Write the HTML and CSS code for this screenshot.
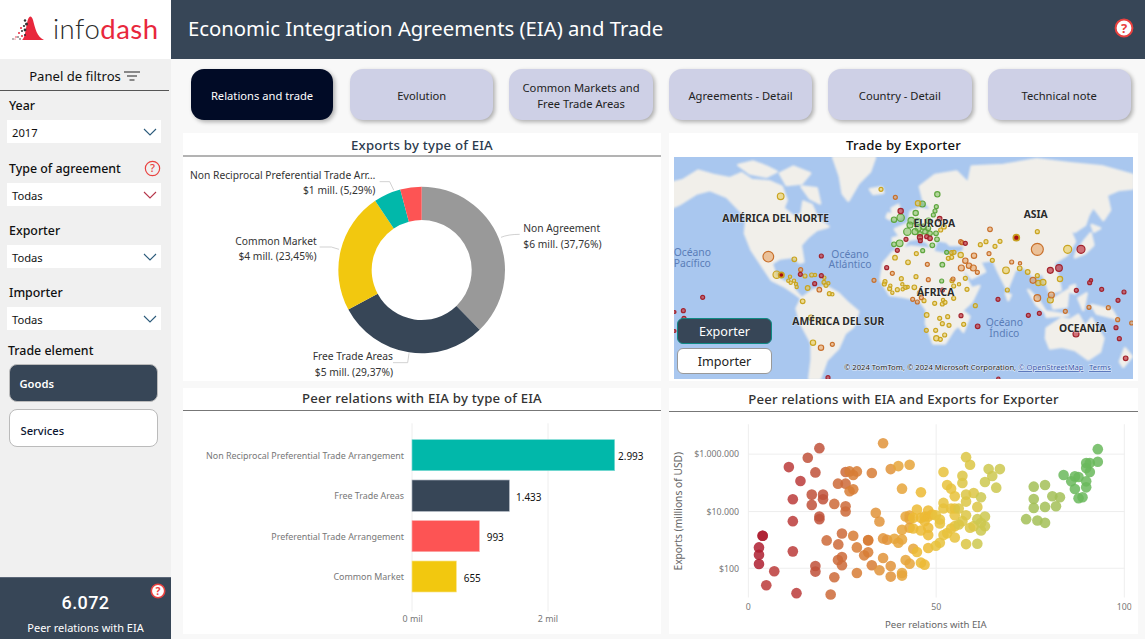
FILE: index.html
```html
<!DOCTYPE html>
<html lang="en">
<head>
<meta charset="utf-8">
<title>Economic Integration Agreements (EIA) and Trade</title>
<link rel="stylesheet" href="styles.css">
</head>
<body>
<div class="app">
  <div class="logo">
    <svg class="logo-mark" viewBox="0 0 33 24" aria-hidden="true">
      <path class="lm-red" d="M11 24C15 22 15 5 18 1.5C19.5 -.5 21 1 22 4C24 12 26 21 33 24Z"/>
      <g class="lm-dark"><circle cx="14" cy="4.5" r="1.2"/><circle cx="15.5" cy="8" r="1.5"/><circle cx="13" cy="10" r="1.1"/><circle cx="14" cy="14" r="1.4"/><circle cx="11" cy="15" r="1"/><circle cx="7" cy="21" r=".8"/><circle cx="2" cy="23" r=".7"/><circle cx="14" cy="19" r="1.1"/><circle cx="9" cy="23" r=".8"/></g>
      <g class="lm-red"><circle cx="10" cy="12" r="1"/><circle cx="8" cy="17" r="1"/><circle cx="11" cy="20" r="1"/><circle cx="5" cy="21" r=".8"/><circle cx="4" cy="23" r=".6"/></g>
    </svg>
    <span class="logo-text">info<em>dash</em></span>
  </div>
  <header class="topbar">
    <h1>Economic Integration Agreements (EIA) and Trade</h1>
    <svg class="help help-solid" viewBox="0 0 20 20" aria-hidden="true"><circle cx="10" cy="10" r="8.4"/><text x="10" y="14.6">?</text></svg>
  </header>

  <aside class="side">
    <div class="side-head">Panel de filtros
      <svg class="filter-ico" viewBox="0 0 16 11" aria-hidden="true"><path d="M0 1h16M3 5h10M5.5 9h5"/></svg>
    </div>
    <div class="filters">
      <div class="f-label">Year</div>
      <div class="dd"><span>2017</span><svg viewBox="0 0 14 8" aria-hidden="true"><path d="M1 1l6 6 6-6"/></svg></div>
      <div class="f-label f-row">Type of agreement
        <svg class="help help-line" viewBox="0 0 20 20" aria-hidden="true"><circle cx="10" cy="10" r="8.4"/><text x="10" y="14.6">?</text></svg>
      </div>
      <div class="dd dd-alert"><span>Todas</span><svg viewBox="0 0 14 8" aria-hidden="true"><path d="M1 1l6 6 6-6"/></svg></div>
      <div class="f-label">Exporter</div>
      <div class="dd"><span>Todas</span><svg viewBox="0 0 14 8" aria-hidden="true"><path d="M1 1l6 6 6-6"/></svg></div>
      <div class="f-label">Importer</div>
      <div class="dd"><span>Todas</span><svg viewBox="0 0 14 8" aria-hidden="true"><path d="M1 1l6 6 6-6"/></svg></div>
      <div class="f-label f-trade">Trade element</div>
      <div class="toggle toggle-on">Goods</div>
      <div class="toggle">Services</div>
    </div>
    <div class="kpi">
      <svg class="help help-solid kpi-help" viewBox="0 0 20 20" aria-hidden="true"><circle cx="10" cy="10" r="8.4"/><text x="10" y="14.6">?</text></svg>
      <div class="kpi-num">6.072</div>
      <div class="kpi-cap">Peer relations with EIA</div>
    </div>
  </aside>

  <main class="main">
    <nav class="tabs">
      <a class="tab tab-on">Relations and trade</a>
      <a class="tab">Evolution</a>
      <a class="tab">Common Markets and<br>Free Trade Areas</a>
      <a class="tab">Agreements - Detail</a>
      <a class="tab">Country - Detail</a>
      <a class="tab">Technical note</a>
    </nav>
    <div class="grid">
      <section class="panel">
        <h2 class="ptitle line-light">Exports by type of EIA</h2>
        <svg class="chart" viewBox="10 81 1434 672" role="img">
          <path class="d-gray" d="M726 170A250 250 0 0 1 899.9 599.6L830.3 527.8A150 150 0 0 0 726 270Z"/>
          <path class="d-navy" d="M899.9 599.6A250 250 0 0 1 506 538.6L594 491.2A150 150 0 0 0 830.3 527.8Z"/>
          <path class="d-yellow" d="M506 538.6A250 250 0 0 1 586.6 212.5L642.3 295.5A150 150 0 0 0 594 491.2Z"/>
          <path class="d-teal" d="M586.6 212.5A250 250 0 0 1 661.8 178.4L687.5 275A150 150 0 0 0 642.3 295.5Z"/>
          <path class="d-red" d="M661.8 178.4A250 250 0 0 1 726 170L726 270A150 150 0 0 0 687.5 275Z"/>
          <path class="leader" d="M964 322Q985 313 1020 313M420 351H455L478 358M600 155H630L642 180M640 698H684L688 670"/>
          <text class="lbl end" x="587" y="148">Non Reciprocal Preferential Trade Arr…</text>
          <text class="lbl end" x="587" y="191">$1 mill. (5,29%)</text>
          <text class="lbl end" x="411" y="346">Common Market</text>
          <text class="lbl end" x="411" y="390">$4 mill. (23,45%)</text>
          <text class="lbl" x="1031" y="307">Non Agreement</text>
          <text class="lbl" x="1031" y="353">$6 mill. (37,76%)</text>
          <text class="lbl end" x="640" y="691">Free Trade Areas</text>
          <text class="lbl end" x="640" y="737">$5 mill. (29,37%)</text>
        </svg>
      </section>

      <section class="panel">
        <h2 class="ptitle ptitle-map">Trade by Exporter</h2>
        <div class="map">
          <svg class="map-svg" viewBox="12 82 1377 664" role="img">
            <rect class="water" x="0" y="0" width="1425" height="765"/>
            <g class="land">
              <path d="M0 160L40 150L85 122L130 135L180 145L215 130L245 150L300 155L335 170L350 210L340 235L375 262L395 250L400 215L425 225L445 270L475 290L440 300L415 320L392 345L400 395L388 398L372 380L330 385L305 400L318 440L345 458L372 452L372 478L395 505L375 490L345 470L305 450L275 405L245 360L225 310L230 262L170 200L120 180L80 190L30 222L0 235Z"/>
              <path d="M205 105L250 95L290 110L320 125L290 140L240 130ZM330 130L370 110L420 130L395 160L350 165ZM395 170L420 205L450 220L440 175ZM490 82L615 82L600 125L565 160L535 212L518 190L510 140Z"/>
              <path d="M395 505L430 480L470 470L505 490L535 520L565 545L550 590L525 610L505 655L470 690L450 746L418 746L425 690L425 640L390 575L380 535Z"/>
              <path d="M640 400L670 365L720 350L770 355L800 368L855 378L885 440L905 475L928 468L905 515L878 540L875 575L850 600L825 640L790 640L768 580L770 540L748 510L700 500L660 495L632 450Z"/>
              <path d="M670 345L668 325L690 320L675 298L715 280L722 245L750 235L790 245L760 210L750 170L795 135L860 125L895 160L905 110L1000 105L1100 88L1200 100L1300 110L1389 135L1389 175L1345 180L1310 195L1320 240L1300 270L1270 230L1255 255L1245 285L1215 305L1200 300L1215 335L1190 375L1150 400L1165 440L1172 480L1140 490L1118 430L1090 440L1060 410L1035 420L1012 478L985 425L970 390L930 395L945 425L905 445L880 415L860 372L880 365L885 345L840 345L830 335L800 330L790 360L770 335L740 325L715 330L700 350L680 352Z"/>
              <path d="M665 235L685 225L695 260L672 272ZM655 250L665 255L660 268L650 262ZM600 178L635 172L640 188L610 192Z"/>
              <path d="M1245 330L1262 310L1270 345L1245 370L1215 382L1220 365ZM1265 285L1290 295L1272 305Z"/>
              <path d="M1130 595L1175 565L1200 570L1225 555L1245 590L1265 565L1300 625L1290 665L1255 688L1215 660L1175 650L1140 655L1128 625Z"/>
              <path d="M1075 480L1105 510L1130 550L1100 525ZM1125 545L1195 555L1130 560ZM1145 510L1195 480L1190 530L1150 535ZM1225 505L1250 490L1240 540ZM1265 525L1325 540L1340 565L1280 550ZM885 548L898 560L880 605L868 590ZM1365 655L1385 680L1360 710L1350 695ZM1200 470L1215 465L1215 490L1200 485ZM1008 490L1022 495L1015 510Z"/>
            </g>
            <g class="pts pg">
              <circle cx="802" cy="193" r="8"/><circle cx="757" cy="222" r="9"/><circle cx="737" cy="249" r="8"/><circle cx="692" cy="263" r="11"/><circle cx="672" cy="269" r="8"/><circle cx="724" cy="272" r="10"/><circle cx="742" cy="275" r="10"/><circle cx="775" cy="272" r="8"/><circle cx="799" cy="230" r="6"/><circle cx="795" cy="243" r="6"/><circle cx="790" cy="255" r="6"/><circle cx="720" cy="285" r="9"/><circle cx="745" cy="295" r="9"/><circle cx="760" cy="290" r="8"/><circle cx="775" cy="295" r="7"/><circle cx="712" cy="305" r="11"/><circle cx="780" cy="310" r="7"/><circle cx="798" cy="310" r="7"/><circle cx="801" cy="328" r="7"/><circle cx="672" cy="343" r="7"/><circle cx="689" cy="340" r="10"/><circle cx="787" cy="346" r="7"/><circle cx="758" cy="362" r="6"/><circle cx="817" cy="404" r="7"/><circle cx="830" cy="367" r="6"/><circle cx="815" cy="453" r="6"/><circle cx="735" cy="305" r="9"/><circle cx="765" cy="305" r="7"/><circle cx="750" cy="312" r="7"/>
            </g>
            <g class="pts py">
              <circle cx="633" cy="178" r="6"/><circle cx="332" cy="199" r="10"/><circle cx="744" cy="220" r="8"/><circle cx="822" cy="290" r="7"/><circle cx="812" cy="300" r="6"/><circle cx="373" cy="388" r="7"/><circle cx="320" cy="434" r="11"/><circle cx="675" cy="383" r="7"/><circle cx="714" cy="397" r="7"/><circle cx="739" cy="371" r="6"/><circle cx="845" cy="368" r="6"/><circle cx="852" cy="367" r="6"/><circle cx="835" cy="385" r="6"/><circle cx="845" cy="382" r="6"/><circle cx="872" cy="375" r="8"/><circle cx="967" cy="391" r="6"/><circle cx="1102" cy="305" r="6"/><circle cx="948" cy="335" r="6"/><circle cx="990" cy="334" r="6"/><circle cx="931" cy="344" r="6"/><circle cx="975" cy="349" r="6"/><circle cx="1008" cy="421" r="10"/><circle cx="1049" cy="415" r="7"/><circle cx="1073" cy="426" r="7"/><circle cx="1102" cy="437" r="6"/><circle cx="1105" cy="459" r="8"/><circle cx="1119" cy="457" r="9"/><circle cx="1170" cy="447" r="8"/><circle cx="1193" cy="358" r="12"/><circle cx="1012" cy="480" r="6"/><circle cx="1141" cy="510" r="9"/><circle cx="916" cy="527" r="6"/><circle cx="891" cy="478" r="6"/><circle cx="886" cy="445" r="6"/><circle cx="867" cy="463" r="5"/><circle cx="851" cy="468" r="6"/><circle cx="846" cy="452" r="6"/><circle cx="738" cy="440" r="6"/><circle cx="694" cy="446" r="6"/><circle cx="667" cy="488" r="5"/><circle cx="659" cy="476" r="6"/><circle cx="645" cy="455" r="6"/><circle cx="643" cy="462" r="6"/><circle cx="661" cy="467" r="5"/><circle cx="697" cy="463" r="5"/><circle cx="682" cy="479" r="6"/><circle cx="698" cy="478" r="5"/><circle cx="707" cy="472" r="6"/><circle cx="713" cy="471" r="5"/><circle cx="733" cy="472" r="7"/><circle cx="750" cy="490" r="8"/><circle cx="762" cy="512" r="6"/><circle cx="794" cy="520" r="6"/><circle cx="817" cy="522" r="6"/><circle cx="825" cy="517" r="6"/><circle cx="819" cy="510" r="5"/><circle cx="851" cy="505" r="6"/><circle cx="770" cy="555" r="7"/><circle cx="809" cy="565" r="6"/><circle cx="833" cy="560" r="6"/><circle cx="817" cy="581" r="6"/><circle cx="837" cy="586" r="6"/><circle cx="881" cy="583" r="6"/><circle cx="769" cy="601" r="6"/><circle cx="797" cy="601" r="6"/><circle cx="824" cy="615" r="6"/><circle cx="799" cy="625" r="8"/><circle cx="811" cy="628" r="6"/><circle cx="429" cy="638" r="8"/><circle cx="423" cy="563" r="8"/><circle cx="456" cy="575" r="7"/><circle cx="398" cy="514" r="7"/><circle cx="413" cy="474" r="7"/><circle cx="478" cy="491" r="6"/><circle cx="487" cy="493" r="5"/><circle cx="405" cy="438" r="6"/><circle cx="425" cy="435" r="6"/><circle cx="435" cy="435" r="5"/><circle cx="360" cy="440" r="5"/><circle cx="355" cy="452" r="5"/><circle cx="362" cy="458" r="5"/><circle cx="372" cy="452" r="5"/><circle cx="378" cy="462" r="5"/><circle cx="380" cy="471" r="5"/><circle cx="463" cy="443" r="5"/><circle cx="462" cy="457" r="6"/><circle cx="468" cy="466" r="6"/><circle cx="475" cy="460" r="5"/>
            </g>
            <g class="pts po">
              <circle cx="676" cy="202" r="6"/><circle cx="960" cy="298" r="7"/><circle cx="872" cy="335" r="6"/><circle cx="876" cy="338" r="6"/><circle cx="912" cy="377" r="8"/><circle cx="957" cy="371" r="6"/><circle cx="874" cy="414" r="9"/><circle cx="886" cy="392" r="8"/><circle cx="897" cy="407" r="8"/><circle cx="910" cy="414" r="9"/><circle cx="922" cy="427" r="6"/><circle cx="1025" cy="396" r="6"/><circle cx="1050" cy="400" r="5"/><circle cx="1102" cy="358" r="18"/><circle cx="1089" cy="451" r="9"/><circle cx="1102" cy="504" r="10"/><circle cx="1144" cy="495" r="9"/><circle cx="1257" cy="532" r="6"/><circle cx="1186" cy="544" r="6"/><circle cx="1315" cy="533" r="6"/><circle cx="1385" cy="579" r="6"/><circle cx="1343" cy="569" r="6"/><circle cx="612" cy="451" r="6"/><circle cx="667" cy="430" r="6"/><circle cx="775" cy="449" r="6"/><circle cx="849" cy="447" r="6"/><circle cx="728" cy="508" r="6"/><circle cx="742" cy="516" r="6"/><circle cx="754" cy="503" r="6"/><circle cx="772" cy="403" r="6"/><circle cx="453" cy="653" r="8"/><circle cx="487" cy="643" r="6"/><circle cx="392" cy="419" r="6"/><circle cx="448" cy="479" r="7"/><circle cx="295" cy="380" r="16"/>
            </g>
            <g class="pts pr">
              <circle cx="454" cy="378" r="6"/><circle cx="692" cy="243" r="8"/><circle cx="809" cy="266" r="7"/><circle cx="391" cy="433" r="6"/><circle cx="708" cy="328" r="6"/><circle cx="682" cy="361" r="6"/><circle cx="650" cy="413" r="6"/><circle cx="886" cy="340" r="6"/><circle cx="750" cy="322" r="8"/><circle cx="770" cy="320" r="6"/><circle cx="780" cy="325" r="7"/><circle cx="751" cy="332" r="6"/><circle cx="1233" cy="358" r="12"/><circle cx="1167" cy="414" r="10"/><circle cx="1141" cy="421" r="9"/><circle cx="1259" cy="458" r="6"/><circle cx="1263" cy="451" r="5"/><circle cx="1219" cy="481" r="6"/><circle cx="1295" cy="478" r="6"/><circle cx="1362" cy="486" r="6"/><circle cx="1344" cy="511" r="6"/><circle cx="984" cy="508" r="6"/><circle cx="1075" cy="556" r="6"/><circle cx="1108" cy="550" r="6"/><circle cx="923" cy="589" r="7"/><circle cx="1218" cy="612" r="9"/><circle cx="1338" cy="593" r="6"/><circle cx="1348" cy="626" r="6"/><circle cx="1367" cy="685" r="7"/><circle cx="873" cy="557" r="6"/><circle cx="817" cy="480" r="6"/><circle cx="98" cy="502" r="6"/><circle cx="40" cy="542" r="6"/><circle cx="42" cy="565" r="6"/><circle cx="14" cy="546" r="4"/><circle cx="14" cy="603" r="4"/><circle cx="434" cy="461" r="6"/><circle cx="454" cy="437" r="6"/><circle cx="474" cy="743" r="6"/><circle cx="985" cy="746" r="5"/>
            </g>
            <g class="pts pd"><circle cx="1039" cy="323" r="9"/><circle cx="334" cy="435" r="8"/></g>
            <g class="m-sea">
              <text x="67" y="378">Océano</text><text x="67" y="410">Pacífico</text>
              <text x="540" y="383">Océano</text><text x="540" y="414">Atlántico</text>
              <text x="1003" y="589">Océano</text><text x="1003" y="620">Índico</text>
            </g>
            <g class="m-cont">
              <text x="317" y="275">AMÉRICA DEL NORTE</text><text x="793" y="292">EUROPA</text><text x="1097" y="265">ASIA</text>
              <text x="797" y="497">ÁFRICA</text><text x="505" y="584">AMÉRICA DEL SUR</text><text x="1238" y="606">OCEANÍA</text>
            </g>
            <text class="m-attr" x="522" y="720">© 2024 TomTom, © 2024 Microsoft Corporation, <tspan class="m-link">© OpenStreetMap</tspan> <tspan class="m-link" dx="10">Terms</tspan></text>
          </svg>
          <div class="map-btns">
            <div class="mbtn mbtn-on">Exporter</div>
            <div class="mbtn">Importer</div>
          </div>
        </div>
      </section>

      <section class="panel">
        <h2 class="ptitle ptitle-short">Peer relations with EIA by type of EIA</h2>
        <svg class="chart" viewBox="10 78 1434 669" role="img">
          <path class="gridl" d="M697 115V680M1105 115V680"/>
          <rect class="b-teal" x="697" y="164" width="608" height="93"/>
          <rect class="b-navy" x="697" y="285" width="292" height="94"/>
          <rect class="b-red" x="697" y="407" width="202" height="93"/>
          <rect class="b-yellow" x="697" y="528" width="133" height="93"/>
          <text class="axl end" x="673" y="222">Non Reciprocal Preferential Trade Arrangement</text>
          <text class="axl end" x="673" y="342">Free Trade Areas</text>
          <text class="axl end" x="673" y="465">Preferential Trade Arrangement</text>
          <text class="axl end" x="673" y="585">Common Market</text>
          <text class="val" x="1315" y="224">2.993</text>
          <text class="val" x="1009" y="347">1.433</text>
          <text class="val" x="921" y="467">993</text>
          <text class="val" x="852" y="591">655</text>
          <text class="axl mid" x="699" y="711">0 mil</text>
          <text class="axl mid" x="1105" y="711">2 mil</text>
        </svg>
      </section>

      <section class="panel">
        <h2 class="ptitle">Peer relations with EIA and Exports for Exporter</h2>
        <svg class="chart" viewBox="0 81 1407 669" role="img">
          <clipPath id="plot-clip"><rect x="0" y="81" width="1391" height="669"/></clipPath>
          <path class="gridl" d="M236 118V640M802 118V640M1369 118V640M236 208H1369M236 381H1369M236 552H1369"/>
          <text class="axv end" x="208" y="218">$1.000.000</text>
          <text class="axv end" x="208" y="391">$10.000</text>
          <text class="axv end" x="208" y="563">$100</text>
          <text class="axv mid" x="236" y="678">0</text>
          <text class="axv mid" x="802" y="678">50</text>
          <text class="axv mid" x="1369" y="678" clip-path="url(#plot-clip)">100</text>
          <text class="axt mid" x="801" y="731">Peer relations with EIA</text>
          <text class="axt axt-v mid" transform="translate(36 380) rotate(-90)">Exports (millions of USD)</text>
          <g class="sc s0"><circle cx="279" cy="454"/><circle cx="279" cy="454"/><circle cx="268" cy="489"/><circle cx="268" cy="511"/><circle cx="268" cy="539"/></g>
          <g class="sc s1"><circle cx="314" cy="561"/><circle cx="290" cy="603"/><circle cx="358" cy="247"/><circle cx="370" cy="344"/><circle cx="370" cy="410"/><circle cx="370" cy="501"/><circle cx="393" cy="289"/><circle cx="381" cy="627"/></g>
          <g class="sc s2"><circle cx="415" cy="219"/><circle cx="450" cy="190"/><circle cx="438" cy="263"/><circle cx="427" cy="330"/><circle cx="427" cy="361"/><circle cx="461" cy="330"/><circle cx="461" cy="344"/><circle cx="450" cy="396"/><circle cx="450" cy="404"/><circle cx="438" cy="545"/><circle cx="438" cy="562"/></g>
          <g class="sc s3"><circle cx="472" cy="468"/><circle cx="495" cy="358"/><circle cx="484" cy="631"/><circle cx="495" cy="579"/><circle cx="506" cy="297"/><circle cx="507" cy="480"/><circle cx="506" cy="527"/><circle cx="518" cy="518"/><circle cx="518" cy="543"/><circle cx="518" cy="447"/><circle cx="529" cy="262"/><circle cx="529" cy="297"/><circle cx="529" cy="365"/><circle cx="529" cy="381"/></g>
          <g class="sc s4"><circle cx="541" cy="260"/><circle cx="541" cy="320"/><circle cx="552" cy="314"/><circle cx="552" cy="271"/><circle cx="563" cy="260"/><circle cx="552" cy="454"/><circle cx="563" cy="489"/><circle cx="563" cy="566"/><circle cx="585" cy="513"/><circle cx="597" cy="504"/><circle cx="597" cy="467"/><circle cx="597" cy="468"/><circle cx="608" cy="265"/><circle cx="608" cy="543"/></g>
          <g class="sc s5"><circle cx="620" cy="385"/><circle cx="631" cy="411"/><circle cx="642" cy="175"/><circle cx="642" cy="521"/><circle cx="631" cy="558"/><circle cx="642" cy="462"/><circle cx="654" cy="466"/><circle cx="665" cy="253"/><circle cx="665" cy="545"/><circle cx="665" cy="577"/></g>
          <g class="sc s6"><circle cx="688" cy="244"/><circle cx="722" cy="240"/><circle cx="699" cy="312"/><circle cx="676" cy="463"/><circle cx="688" cy="475"/><circle cx="699" cy="465"/><circle cx="699" cy="436"/><circle cx="710" cy="396"/><circle cx="722" cy="393"/><circle cx="722" cy="404"/><circle cx="722" cy="430"/><circle cx="699" cy="566"/><circle cx="699" cy="574"/><circle cx="710" cy="527"/><circle cx="722" cy="538"/><circle cx="733" cy="493"/></g>
          <g class="sc s7"><circle cx="744" cy="503"/><circle cx="744" cy="375"/><circle cx="733" cy="400"/><circle cx="733" cy="432"/><circle cx="756" cy="323"/><circle cx="756" cy="438"/><circle cx="767" cy="396"/><circle cx="767" cy="410"/><circle cx="778" cy="378"/><circle cx="778" cy="396"/><circle cx="778" cy="430"/><circle cx="778" cy="452"/><circle cx="778" cy="491"/><circle cx="756" cy="535"/><circle cx="767" cy="541"/><circle cx="756" cy="400"/><circle cx="790" cy="390"/></g>
          <g class="sc s8"><circle cx="801" cy="392"/><circle cx="813" cy="405"/><circle cx="813" cy="417"/><circle cx="801" cy="484"/><circle cx="813" cy="475"/><circle cx="824" cy="262"/><circle cx="824" cy="355"/><circle cx="824" cy="372"/><circle cx="835" cy="301"/><circle cx="847" cy="312"/><circle cx="858" cy="335"/><circle cx="847" cy="372"/><circle cx="858" cy="372"/><circle cx="858" cy="392"/><circle cx="835" cy="446"/><circle cx="847" cy="432"/><circle cx="858" cy="459"/><circle cx="824" cy="452"/><circle cx="858" cy="425"/></g>
          <g class="sc s9"><circle cx="870" cy="372"/><circle cx="870" cy="420"/><circle cx="881" cy="273"/><circle cx="881" cy="295"/><circle cx="892" cy="217"/><circle cx="904" cy="240"/><circle cx="892" cy="330"/><circle cx="892" cy="351"/><circle cx="892" cy="392"/><circle cx="904" cy="430"/><circle cx="915" cy="325"/><circle cx="892" cy="479"/><circle cx="881" cy="410"/><circle cx="915" cy="425"/><circle cx="926" cy="367"/></g>
          <g class="sc s10"><circle cx="926" cy="478"/><circle cx="926" cy="404"/><circle cx="937" cy="338"/><circle cx="937" cy="438"/><circle cx="949" cy="292"/><circle cx="949" cy="396"/><circle cx="949" cy="425"/><circle cx="960" cy="253"/><circle cx="971" cy="274"/><circle cx="983" cy="309"/><circle cx="994" cy="253"/><circle cx="937" cy="415"/></g>
          <g class="sc s11"><circle cx="1073" cy="404"/><circle cx="1096" cy="306"/><circle cx="1096" cy="343"/><circle cx="1096" cy="370"/><circle cx="1107" cy="408"/><circle cx="1130" cy="301"/><circle cx="1130" cy="367"/><circle cx="1130" cy="415"/><circle cx="1152" cy="335"/><circle cx="1163" cy="365"/><circle cx="1175" cy="338"/></g>
          <g class="sc s12"><circle cx="1186" cy="271"/><circle cx="1209" cy="290"/><circle cx="1220" cy="275"/><circle cx="1220" cy="313"/><circle cx="1231" cy="277"/><circle cx="1231" cy="341"/><circle cx="1243" cy="338"/><circle cx="1254" cy="235"/><circle cx="1254" cy="290"/><circle cx="1254" cy="308"/><circle cx="1265" cy="262"/><circle cx="1254" cy="250"/><circle cx="1265" cy="235"/><circle cx="1289" cy="231"/><circle cx="1289" cy="193"/></g>
        </svg>
      </section>
    </div>
  </main>
</div>
</body>
</html>
```

FILE: styles.css
```css
* { box-sizing: border-box; }
html, body { margin: 0; height: 100%; overflow: hidden; }
body { font-family: "Noto Sans", "Open Sans", sans-serif; background: #f8f8f8; color: #111; }

.app { display: grid; grid-template-columns: 171px 1fr; grid-template-rows: 59px 580px; width: 1145px; height: 639px; }

/* brand */
.logo { background: #fff; display: flex; align-items: flex-start; padding: 16px 0 0 11px; gap: 9px; }
.logo-mark { width: 33px; height: 24px; flex: none; overflow: visible; }
.lm-red { fill: #e8273c; }
.lm-dark { fill: #333; }
.logo-text { font-family: Lato, sans-serif; font-weight: 300; font-size: 27.5px; color: #2a2a2a; line-height: 28px; margin-top: -1px; letter-spacing: .5px; }
.logo-text em { font-style: normal; color: #e8273c; font-weight: 400; }

.topbar { background: #374657; display: flex; align-items: center; justify-content: space-between; padding: 0 11px 3px 17px; }
.topbar h1 { margin: 0; font-weight: 400; font-size: 20.3px; color: #fff; }

.help { display: block; }
.help circle { stroke: #e9413f; stroke-width: 1.4; }
.help text { font-family: "Noto Sans", sans-serif; font-size: 13px; text-anchor: middle; font-weight: 500; }
.help-solid { width: 20px; height: 20px; }
.help-solid circle { fill: #fff; stroke-width: 2; }
.help-solid text { fill: #e9413f; font-weight: 700; }
.help-line { width: 17px; height: 17px; margin-top: 2px; flex: none; }
.help-line circle { fill: none; }
.help-line text { fill: #e9413f; }

/* sidebar */
.side { background: #f0f0f0; display: flex; flex-direction: column; }
.side-head { height: 32px; width: 169px; padding-top: 7px; border-bottom: 1px solid #555; font-size: 13.1px; display: flex; justify-content: center; align-items: flex-start; gap: 3px; line-height: 20px; }
.filter-ico { width: 16px; height: 11px; margin-top: 5px; }
.filter-ico path { fill: none; stroke: #666; stroke-width: 1.6; }
.filters { padding: 0 0 0 7px; flex: 1; }
.f-label { font-size: 12.4px; font-weight: 500; line-height: 20px; padding-left: 2px; margin-top: 5px; height: 24px; }
.f-row { display: flex; justify-content: space-between; align-items: flex-start; width: 154px; margin-top: 15px; height: 25px; line-height: 21px; }
.dd { width: 154px; height: 23px; background: #fff; display: flex; align-items: center; justify-content: space-between; padding: 2px 4px 0 5px; font-size: 11.2px; margin-bottom: 15px; }
.dd svg { width: 14px; height: 8px; margin-top: -2px; }
.dd path { fill: none; stroke: #2b5a7a; stroke-width: 1.1; }
.dd-alert path { stroke: #b5364a; }
.f-trade { padding-left: 1px; margin-top: -5px; height: 24px; line-height: 22px; }
.toggle { width: 149.5px; height: 38px; margin: 0 0 7px 1.5px; border: 1px solid #bbb; border-radius: 8px; background: #fff; font-size: 11.2px; font-weight: 500; display: flex; align-items: center; padding: 5px 0 0 11px; color: #0b1530; }
.toggle-on { background: #374657; color: #fff; padding: 0 0 0 10px; font-weight: 600; }

.kpi { height: 62px; background: #374657; color: #fff; text-align: center; position: relative; padding-top: 13px; border-top: 1px solid #5b6778; }
.kpi-help { position: absolute; right: 5px; top: 5px; width: 16px; height: 16px; }
.kpi-num { font-family: Roboto, sans-serif; font-size: 18px; font-weight: 500; line-height: 24px; letter-spacing: .4px; }
.kpi-cap { font-size: 11px; line-height: 16px; margin-top: 5px; }

/* main */
.main { padding: 10px 7px 0 12px; display: flex; flex-direction: column; }
.tabs { display: flex; gap: 16px; padding-left: 8px; height: 51px; }
.tab { width: 143.4px; height: 51px; padding-top: 2px; border-radius: 13px; background: #ced0e6; box-shadow: 2px 2px 4px rgba(0,0,0,.3); font-size: 11.2px; line-height: 16px; color: #222; display: flex; align-items: center; justify-content: center; text-align: center; }
.tab-on { background: #010b26; color: #fff; width: 142px; margin-right: 1px; }

.grid { display: grid; grid-template-columns: 478px 469px; grid-template-rows: 248px 246px; gap: 7px 8px; margin-top: 13px; }
.panel { background: #fff; display: flex; flex-direction: column; min-width: 0; }
.ptitle { margin: 0; height: 24px; flex: none; text-align: center; font-size: 13.2px; font-weight: 500; line-height: 23px; color: #333; border-bottom: 1px solid #777; letter-spacing: .2px; }
.ptitle-short { height: 23px; line-height: 21px; }
.line-light { border-bottom: 2px solid #b3b3b3; color: #2b3a4d; line-height: 25px; }
.ptitle-map { border: 0; color: #111; line-height: 25px; }
.chart { display: block; width: 100%; flex: 1; min-height: 0; }

/* shared chart text */
.chart text { font-family: "Noto Sans", sans-serif; }
.end { text-anchor: end; }
.mid { text-anchor: middle; }
.lbl { font-size: 30.8px; fill: #333; }
.axl { font-size: 26.7px; fill: #777; }
.axv { font-size: 26.5px; fill: #777; }
.axt { font-size: 29px; fill: #666; }
.axt-v { font-size: 31px; }
.val { font-size: 30px; fill: #111; }
.leader { fill: none; stroke: #c8c8c8; stroke-width: 2.5; }
.gridl { fill: none; stroke: #eeeeee; stroke-width: 3; }

.d-gray { fill: #999; }
.d-navy { fill: #374657; }
.d-yellow { fill: #f2c80f; }
.d-teal { fill: #01b8aa; }
.d-red { fill: #fd5454; }

.b-teal { fill: #01b8aa; stroke: #7fdcd4; stroke-width: 2; }
.b-navy { fill: #374657; stroke: #a9b1bc; stroke-width: 2; }
.b-red { fill: #fd5454; stroke: #fda9a9; stroke-width: 2; }
.b-yellow { fill: #f2c80f; stroke: #f8e387; stroke-width: 2; }

/* map */
.map { position: relative; margin: 0 5px 2px 5px; height: 222px; overflow: hidden; }
.map-svg { display: block; width: 100%; height: 100%; }
.map-svg text { font-family: "Noto Sans", sans-serif; text-anchor: middle; }
.water { fill: #a9c7ef; }
.land { fill: #f1efea; stroke: #f1efea; stroke-width: 8; stroke-linejoin: round; filter: blur(2.5px); }
.pts circle { stroke-width: 3.5; fill-opacity: .55; }
.pg circle { fill: #7fbf5a; stroke: #5ea63e; }
.py circle { fill: #e8c84c; stroke: #c9a421; }
.po circle { fill: #e59a55; stroke: #c8702c; }
.pr circle { fill: #c2454f; stroke: #a3222c; fill-opacity: .75; }
.pd circle { fill: #a80d12; stroke: #c8a020; stroke-width: 5; fill-opacity: 1; }
.m-sea text { font-size: 31px; fill: #5a7db8; }
.m-cont text { font-size: 31px; font-weight: 700; fill: #2b2b2b; paint-order: stroke; stroke: rgba(255,255,255,.5); stroke-width: 3px; }
.map-svg .m-attr { font-size: 23px; fill: #222; text-anchor: start; paint-order: stroke; stroke: rgba(255,255,255,.7); stroke-width: 3px; }
.m-link { fill: #3355aa; text-decoration: underline; }
.map-btns { position: absolute; left: 3px; top: 161px; width: 95px; display: flex; flex-direction: column; gap: 4px; }
.mbtn { height: 26px; border-radius: 6px; background: #fff; border: 1px solid #999; font-size: 12.6px; display: flex; align-items: center; justify-content: center; color: #222; }
.mbtn-on { background: #374657; border-color: #0f8a84; color: #fff; }

/* scatter */
.sc circle { r: 16px; opacity: .85; }
.s0 circle { fill: #ae1f30; }
.s1 circle { fill: #bb3b39; }
.s2 circle { fill: #c0513a; }
.s3 circle { fill: #cc6a38; }
.s4 circle { fill: #d77d35; }
.s5 circle { fill: #e0933a; }
.s6 circle { fill: #e6a53a; }
.s7 circle { fill: #ecba34; }
.s8 circle { fill: #e8c23c; }
.s9 circle { fill: #dcc644; }
.s10 circle { fill: #cdc84f; }
.s11 circle { fill: #a3bf57; }
.s12 circle { fill: #6ab85c; }
```
